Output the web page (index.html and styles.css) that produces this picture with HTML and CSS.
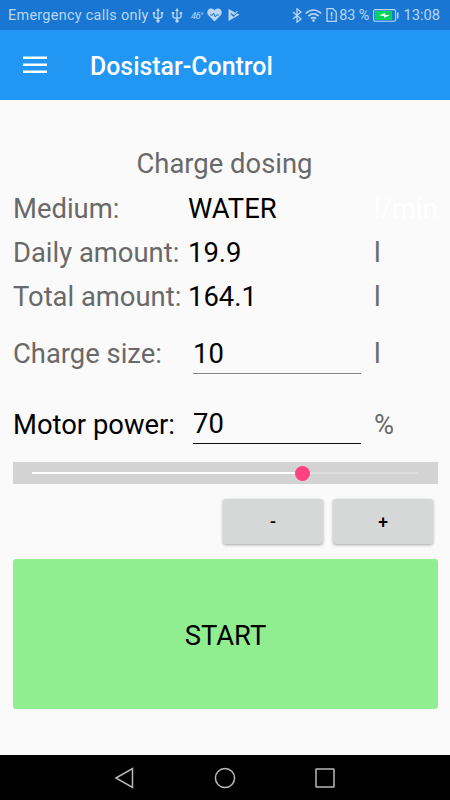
FILE: index.html
```html
<!DOCTYPE html>
<html lang="en">
<head>
    <meta charset="UTF-8">
    <meta name="viewport" content="width=device-width, initial-scale=1.0">
    <title>Dosistar-Control</title>
    <link rel="stylesheet" href="styles.css">
</head>
<body>
    <div class="status-bar">
        <span class="carrier">Emergency calls only</span>
        <svg class="usb" width="12" height="15" viewBox="0 0 12 15">
            <path d="M6 1v12M2 5v3.5q0 1.5 4 2M10 5v3.5q0 1.5-4 2" fill="none" stroke="currentColor" stroke-width="1.3"/>
            <path d="M6 0l2 3H4zM.8 4h2.4v2.2H.8zM8.8 4h2.4v2.2H8.8z"/>
            <circle cx="6" cy="13" r="1.7"/>
        </svg>
        <svg class="usb second" width="12" height="15" viewBox="0 0 12 15">
            <path d="M6 1v12M2 5v3.5q0 1.5 4 2M10 5v3.5q0 1.5-4 2" fill="none" stroke="currentColor" stroke-width="1.3"/>
            <path d="M6 0l2 3H4zM.8 4h2.4v2.2H.8zM8.8 4h2.4v2.2H8.8z"/>
            <circle cx="6" cy="13" r="1.7"/>
        </svg>
        <span class="temp">46°</span>
        <svg class="heart" width="15" height="14" viewBox="0 0 15 14">
            <path d="M7.5 13.5L1.3 7.3C-.8 4.8.3.5 4 .5c1.6 0 2.7.7 3.5 1.9C8.3 1.2 9.4.5 11 .5c3.7 0 4.8 4.3 2.7 6.8z"/>
            <path d="M3 7h2.5l1-2 1.800 4 1.200-2H12" fill="none" stroke="#1976d2"/>
        </svg>
        <svg class="play" width="12" height="12" viewBox="0 0 12 12">
            <path d="M.5 0L11.5 5.8.5 12z"/>
            <path d="M3 4.500l2.500 2.500L9 3" fill="none" stroke="#1976d2" stroke-width="1.200"/>
            <path d="M6.500 5.500L9.500 2"  fill="none" stroke="currentColor"/>
        </svg>
        <div class="status-right">
            <svg width="10" height="15" viewBox="0 0 10 15">
                <path d="M1 4l8 7-4 3.2V.8L9 4l-8 7" fill="none" stroke="currentColor" stroke-width="1.3"/>
            </svg>
            <svg class="wifi" width="17" height="13" viewBox="0 0 17 13">
                <path d="M.7 4.5Q8.5-2.5 16.3 4.5M3.3 7.2q5.2-4.5 10.4 0M5.8 9.7q2.7-2.2 5.4 0" fill="none" stroke="currentColor" stroke-width="1.6"/>
                <circle cx="8.5" cy="11.6" r="1.3"/>
            </svg>
            <svg class="sim" width="11" height="14" viewBox="0 0 11 14">
                <path d="M1 .7h6L10.2 4v9.3H1z" fill="none" stroke="currentColor" stroke-width="1.3"/>
                <path d="M4.8 4h1.6v4.5H4.8zM4.8 9.6h1.6v1.5H4.8z"/>
            </svg>
            <span class="percent">83 %</span>
            <svg class="battery" width="26" height="13" viewBox="0 0 26 13">
                <rect x=".6" y=".6" width="22" height="11.6" rx="1.5" fill="none" stroke="currentColor" stroke-width="1.1"/>
                <rect x="2" y="2" width="17" height="9" fill="#00d45a"/>
                <path d="M6 6.2l6-2.2v1.7l5 .6-6 2.5V7z" fill="#fff"/>
                <path d="M24 3.5h1.5v6H24z"/>
            </svg>
            <span class="clock">13:08</span>
        </div>
    </div>

    <div class="app-bar">
        <svg class="menu" width="24" height="18" viewBox="0 0 24 18">
            <path d="M0 .5h24V3H0zM0 7.5h24V10H0zM0 14.5h24V17H0z" fill="#fff"/>
        </svg>
        <h1>Dosistar-Control</h1>
    </div>

    <main>
        <h2>Charge dosing</h2>
        <div class="row">
            <span class="label">Medium:</span>
            <span class="value">WATER</span>
            <span class="unit hidden-unit">l/min</span>
        </div>
        <div class="row">
            <span class="label">Daily amount:</span>
            <span class="value">19.9</span>
            <span class="unit">l</span>
        </div>
        <div class="row">
            <span class="label">Total amount:</span>
            <span class="value">164.1</span>
            <span class="unit">l</span>
        </div>
        <div class="row entry">
            <span class="label">Charge size:</span>
            <input class="field" type="text" value="10">
            <span class="unit">l</span>
        </div>
        <div class="row entry">
            <span class="label dark">Motor power:</span>
            <input class="field dark" type="text" value="70">
            <span class="unit">%</span>
        </div>
        <div class="slider">
            <div class="filled" style="width: 70%"></div>
            <div class="thumb"></div>
            <div class="rest"></div>
        </div>
        <div class="steps">
            <button class="step">-</button>
            <button class="step">+</button>
        </div>
        <button class="start">START</button>
    </main>

    <div class="nav-bar">
        <svg width="22" height="22" viewBox="0 0 22 22"><path d="M2 11L18.5 1.5v19z"/></svg>
        <svg width="22" height="22" viewBox="0 0 22 22"><circle cx="11" cy="11" r="9.6"/></svg>
        <svg width="22" height="22" viewBox="0 0 22 22"><rect x="2" y="2" width="18" height="18" rx=".5"/></svg>
    </div>
</body>
</html>
```

FILE: styles.css
```css
* {
    box-sizing: border-box;
}
body {
    margin: 0;
    height: 100vh;
    display: flex;
    flex-direction: column;
    background: #fafafa;
    color: #000;
    font-family: Roboto, sans-serif;
    overflow: hidden;
}
svg {
    display: block;
    flex: none;
}
.status-bar {
    height: 30px;
    flex: none;
    display: flex;
    align-items: center;
    padding: 0 10px 0 8px;
    background: #1976d2;
    color: #bad6f2;
    font-size: 14px;
    white-space: nowrap;
}
.status-bar svg {
    fill: currentColor;
}
.carrier {
    width: 141px;
    font-size: 14.4px;
    letter-spacing: 0.3px;
}
.usb {
    margin-left: 3px;
}
.usb.second {
    margin-left: 7px;
}
.temp {
    width: 12px;
    margin-left: 8px;
    font-size: 9.5px;
    font-style: italic;
    letter-spacing: -0.8px;
}
.heart {
    margin-left: 4px;
}
.play {
    margin-left: 6px;
}
.status-right {
    display: flex;
    align-items: center;
    margin-left: auto;
}
.wifi {
    margin-left: 3px;
}
.sim {
    margin-left: 4px;
}
.percent {
    margin-left: 2px;
    font-size: 14.4px;
}
.battery {
    margin-left: 4px;
}
.clock {
    margin-left: 4px;
    font-size: 14.7px;
}
.app-bar {
    height: 70px;
    flex: none;
    display: flex;
    align-items: center;
    padding: 0 23px;
    background: #2196f3;
    color: #fff;
}
.app-bar h1 {
    margin: 2px 0 0 43px;
    font-size: 24.9px;
    font-weight: 500;
}
main {
    flex: 1;
    padding: 42px 12px 0 13px;
    font-size: 27.4px;
}
h2 {
    margin: 0;
    padding-right: 2px;
    font-size: 27.4px;
    font-weight: 400;
    line-height: 44px;
    text-align: center;
    color: #696969;
}
.row {
    height: 44px;
    display: grid;
    grid-template-columns: 175px 186px 64px;
    align-items: center;
    white-space: nowrap;
}
.row.entry {
    height: 70.5px;
}
.row span {
    padding-top: 2px;
}
.label,
.unit {
    color: #696969;
}
.label.dark {
    color: #000;
}
.hidden-unit {
    color: #fff;
}
.field {
    width: 168px;
    height: 41px;
    margin-left: 5px;
    padding: 2px 0 0;
    border: 0;
    border-bottom: 1px solid #858585;
    background: none;
    color: #000;
    font: inherit;
    outline: none;
}
.field.dark {
    border-color: #111;
}
.slider {
    height: 22px;
    margin-top: 3px;
    padding: 0 20px 0 19px;
    display: flex;
    align-items: center;
    background: #d3d3d3;
}
.filled {
    height: 2px;
    background: #fff;
}
.thumb {
    width: 15px;
    height: 15px;
    margin: 0 -7.5px;
    flex: none;
    z-index: 1;
    border-radius: 50%;
    background: #ff4081;
}
.rest {
    flex: 1;
    height: 2px;
    background: #dfdfdf;
}
.steps {
    display: flex;
    justify-content: flex-end;
    gap: 10px;
    padding: 15px 5px 0 0;
}
.step {
    width: 100px;
    height: 45px;
    padding: 0;
    border: 0;
    border-radius: 3px;
    background: #d6d7d7;
    box-shadow: 0 1px 3px rgba(0, 0, 0, 0.35);
    color: #000;
    font: 500 17.5px Roboto, sans-serif;
}
.start {
    display: block;
    width: 100%;
    height: 150px;
    margin-top: 15px;
    padding: 3px 0 0;
    border: 0;
    border-radius: 3px;
    background: #90ee90;
    color: #000;
    font: inherit;
}
.nav-bar {
    height: 45px;
    flex: none;
    display: flex;
    justify-content: center;
    align-items: center;
    gap: 78px;
    background: #000;
}
.nav-bar svg {
    fill: none;
    stroke: #b8b8b8;
    stroke-width: 1.5;
}
```
